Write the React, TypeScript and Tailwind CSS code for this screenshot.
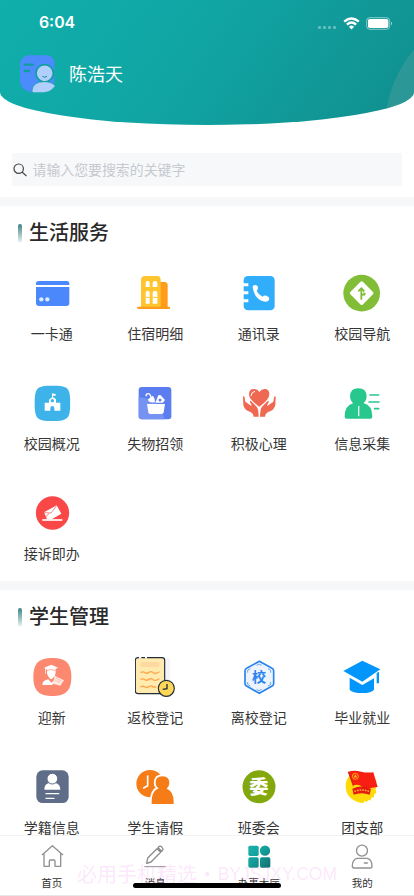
import type { ReactNode } from "react";

type Item = { label: string; box: string; art: ReactNode };

const CARD = "95 39 120 120";
const CARD_R = "406 39 120 120";
const LOW = "95 36 120 120";
const LOW_R = "406 36 120 120";

const life: Item[] = [
  {
    label: "一卡通",
    box: CARD,
    art: (
      <g fill="#4a88fb">
        <path d="M107 75v-4q0-8 8-8h84q8 0 8 8v4z" />
        <path d="M107 81h100v48q0 9-9 9h-82q-9 0-9-9z" />
        <circle cx="123" cy="118" r="6.5" fill="#dceaff" />
        <circle cx="141" cy="118" r="6.5" fill="#dceaff" />
      </g>
    ),
  },
  {
    label: "住宿明细",
    box: CARD_R,
    art: (
      <g>
        <path d="M480 66h14q10 0 10 10v66h-24z" fill="#ff9c1a" />
        <path d="M424 142V60q0-12 12-12h36q11 0 11 12v82z" fill="#fec52f" />
        <rect x="413" y="140" width="98" height="7" rx="2" fill="#ff9c1a" />
        <path
          d="M438 81V69q0-6 6-6t6 6v12zM459 81V69q0-6 7-6t7 6v12zM438 131V98q0-6 6-6t6 6v33zM459 131V98q0-6 7-6t7 6v33z"
          fill="#fff"
        />
        <path d="M438 112h12M459 112h14" stroke="#fec52f" strokeWidth="3" />
      </g>
    ),
  },
  {
    label: "通讯录",
    box: CARD,
    art: (
      <g>
        <rect x="109" y="48" width="93" height="103" rx="13" fill="#30aefb" />
        <path d="M105 70h18v9h-18zM105 94h18v9h-18zM105 118h18v9h-18z" fill="#fff" />
        <path
          d="M136 82q0-7 8-7 8 1 8 9 0 5-4 8 5 12 18 18 4-5 11-3 9 3 9 10-2 8-12 8-33-6-38-43z"
          fill="#fff"
        />
      </g>
    ),
  },
  {
    label: "校园导航",
    box: CARD_R,
    art: (
      <g>
        <circle cx="465" cy="99.500" r="55" fill="#82bd38" />
        <rect x="438.500" y="73" width="53" height="53" rx="5" fill="#fff" transform="rotate(45 465 99.500)" />
        <path d="M464 119V86m-9 8 9-9 9 9M464 108q1-5 9-5" fill="none" stroke="#82bd38" strokeWidth="5.500" />
        <path d="M470 95l8 6-6 8z" fill="#82bd38" />
      </g>
    ),
  },
  {
    label: "校园概况",
    box: CARD,
    art: (
      <g>
        <path
          d="M156 47C180 47 193 48 201 56C208 64 209.500 76 209.500 99.500C209.500 124 208 136 200 144C192 151.500 180 153 156 153C132 153 120 151.500 112 144C105 136 103 124 103 99.500C103 76 105 64 112 56C120 48 132 47 156 47z"
          fill="#3db3e9"
        />
        <path
          d="M155 84V70L166 72V77H158V81L167 88V98H180V122H162V114Q162 108 156 108Q150 108 150 114V122H133V98H146V89L155 82z"
          fill="#fff"
        />
        <circle cx="156" cy="92" r="5" fill="#3db3e9" />
      </g>
    ),
  },
  {
    label: "失物招领",
    box: CARD_R,
    art: (
      <g>
        <rect x="417" y="51" width="98" height="97" rx="9" fill="#5c7df0" />
        <path d="M417 82q66 2 77 66h-68q-9 0-9-9z" fill="#7692f2" />
        <path d="M442 102h54l-4 25q-1 5-6 5h-34q-5 0-6-5z" fill="#fff" />
        <path d="M439 79q0-8 7-8 4 0 6 5l7 21" stroke="#fff" strokeWidth="4" fill="none" />
        <path d="M445 88l15-11q6 8 6 20h-13q-8-2-8-9z" fill="#fff" />
        <path d="M467 98l9-22 6-1 14 15-6 8z" fill="#fff" />
        <circle cx="481" cy="90" r="4.500" fill="#5c7df0" />
      </g>
    ),
  },
  {
    label: "积极心理",
    box: CARD,
    art: (
      <g fill="#ef6852">
        <path d="M156 110q-31-21-31-37 0-16 15-16 11 0 16 9 6-9 16-9 14 0 14 16 0 17-30 37z" />
        <path d="M131 77q1-11 11-13" stroke="#fff" strokeWidth="3" fill="none" strokeLinecap="round" />
        <path d="M107 80q4-3 5 3l2 12 17 12q4 0-2-8-3-8 2-6l17 17q6 7 6 30h-15q0-9-9-14-19-5-22-21z" />
        <path d="M205 80q-4-3-5 3l-2 12-17 12q-4 0 2-8 3-8-2-6l-17 17q-6 7-6 30h15q0-9 9-14 19-5 22-21z" />
      </g>
    ),
  },
  {
    label: "信息采集",
    box: CARD_R,
    art: (
      <g>
        <path
          d="M439 100q-9-9-9-20 0-25 25-25t25 25q0 11-9 20 26 6 26 40 0 6-6 6h-71q-6 0-6-6 0-33 25-40z"
          fill="#27c78d"
        />
        <path d="M456 109v28" stroke="#e7fff6" strokeWidth="4" strokeLinecap="round" />
        <path d="M490 75h26M487 96h30M504 116h12" stroke="#27c78d" strokeWidth="5" strokeLinecap="round" />
      </g>
    ),
  },
  {
    label: "接诉即办",
    box: CARD,
    art: (
      <g>
        <circle cx="156.500" cy="99" r="50" fill="#fa4848" />
        <path d="M131 97l38-21 14 25-29 17h-14z" fill="#fff" />
        <path d="M126 120h60" stroke="#fff" strokeWidth="5" />
        <path d="M131 98l21 1 17-22M135 113l11-13" fill="none" stroke="#fa4848" strokeWidth="2" />
      </g>
    ),
  },
];

const student: Item[] = [
  {
    label: "迎新",
    box: LOW,
    art: (
      <g>
        <path
          d="M156 39C194 39 213 53 213 96C213 139 194 153 156 153C118 153 99 139 99 96C99 53 118 39 156 39z"
          fill="#fd8870"
        />
        <path d="M131 68l22-9 20 9-7 4v11q0 9-8 15l-3 4h-5l-3-4q-7-6-7-14V72l-4 2v12h-2V70z" fill="#fff" />
        <path d="M139 77q13-7 27 0" stroke="#fd8870" strokeWidth="2" fill="none" />
        <path d="M126 120q0-14 18-17l9 10 10-8-7 15z" fill="#fff" />
        <path d="M163 92l28 14-11 16-22-6z" fill="#ffe7df" />
        <path d="M167 99l16 9M165 105l14 8" stroke="#fd8870" strokeWidth="2" strokeDasharray="3 2" />
      </g>
    ),
  },
  {
    label: "返校登记",
    box: LOW_R,
    art: (
      <g>
        <path d="M486 39h20q6 0 6 6v83h-20z" fill="#f5f5f7" />
        <rect x="407" y="38" width="88" height="108" rx="8" fill="#ffebb0" stroke="#222c3b" strokeWidth="3.500" />
        <path d="M418 38h7M436 38h6" stroke="#fff" strokeWidth="5" />
        <rect x="422" y="51" width="58" height="15" rx="6" fill="#ffd9a0" />
        <g stroke="#ffa64a" strokeWidth="4" fill="none" strokeLinecap="round">
          <path d="M424 82q7-3 12 1t12-1 12 1 18-2" />
          <path d="M424 103q7-3 12 1t12-1 12 1 18-2" />
          <path d="M424 125q7-3 12 1t12-1 12 1h9" />
        </g>
        <circle cx="500" cy="130" r="24" fill="#ffd857" stroke="#222c3b" strokeWidth="3.500" />
        <path d="M502 117v14l-13 2" stroke="#222c3b" strokeWidth="4" fill="none" />
      </g>
    ),
  },
  {
    label: "离校登记",
    box: LOW,
    art: (
      <g>
        <path
          d="M156 49l37 20q6 3 6 8v39q0 5-6 8l-37 21-37-21q-6-3-6-8V77q0-5 6-8z"
          fill="#edf4fe"
          stroke="#2b83ee"
          strokeWidth="5"
          strokeLinejoin="round"
        />
        <path
          d="M121 83v-7l8-5M148 61l7-4 8 4M182 71l8 5v7M121 111v7l8 5M148 133l7 4 8-4M182 123l8-5v-7"
          fill="none"
          stroke="#4b94f0"
          strokeWidth="2.500"
        />
        <text x="155" y="112" fontSize="42" fontWeight="700" textAnchor="middle" fill="#2b83ee">
          校
        </text>
      </g>
    ),
  },
  {
    label: "毕业就业",
    box: LOW_R,
    art: (
      <g fill="#0295fb">
        <path d="M410 78l57-31 54 26-54 37z" />
        <path d="M429 98l38 22 35-20v34q-7 10-36 10t-37-10z" />
        <path d="M510 84l7-4v35h-7z" />
      </g>
    ),
  },
  {
    label: "学籍信息",
    box: LOW,
    art: (
      <g>
        <rect x="108" y="46" width="97" height="98" rx="19" fill="#5f6d88" />
        <path d="M132 104q0-18 15-20h18q15 3 15 20z" fill="#fff" />
        <circle cx="156" cy="71" r="16" fill="#fff" stroke="#5f6d88" strokeWidth="3" />
        <path d="M137 116h38M137 130h24" stroke="#fff" strokeWidth="4" strokeLinecap="round" />
      </g>
    ),
  },
  {
    label: "学生请假",
    box: LOW_R,
    art: (
      <g>
        <circle cx="451" cy="86" r="41" fill="#f57c17" />
        <path d="M444 63v29l-12 7" stroke="#fff" strokeWidth="5" fill="none" strokeLinecap="round" />
        <path
          d="M468 83q0-19 20-19t21 19q0 12-8 18 21 8 21 39v7h-66v-7q0-32 21-40-9-6-9-17z"
          fill="#f57c17"
          stroke="#fff"
          strokeWidth="11"
          paintOrder="stroke"
        />
      </g>
    ),
  },
  {
    label: "班委会",
    box: LOW,
    art: (
      <g>
        <circle cx="155" cy="95.500" r="49.500" fill="#83a80d" />
        <text x="155" y="117" fontSize="58" fontWeight="900" textAnchor="middle" fill="#fff">
          委
        </text>
      </g>
    ),
  },
  {
    label: "团支部",
    box: LOW_R,
    art: (
      <g>
        <path
          d="M430 60q-13 14-13 32 0 24 16 38t38 14l2-7 6 4 8-7 5 3 2-9 8-2 1-9 6-3-2-10 2-30z"
          fill="#ffda09"
        />
        <path d="M424 50q20-5 39 0 17 4 37 2l13 44-22 3q-18 4-28-6-10-7-24-2z" fill="#f71e12" />
        <path d="M425 51l15 43" stroke="#b90d08" strokeWidth="2" />
        <circle cx="446" cy="64" r="9" fill="none" stroke="#ffc41b" strokeWidth="2.500" />
        <path d="M446 58l2 4h4l-3 3 1 4-4-2-4 2 1-4-3-3h4z" fill="#ffc41b" />
        <path d="M437 101q28-13 56 0l-4 18q-24-9-48 0z" fill="#e61c12" />
        <path d="M443 109q22-8 44 0" stroke="#ffb53c" strokeWidth="4" strokeDasharray="5 3" fill="none" />
      </g>
    ),
  },
];

function Section({ title, items }: { title: string; items: Item[] }) {
  return (
    <section>
      <div className="h-[8.500px] bg-[#f6f7f9]" />
      <div className="flex h-[67.500px] items-start pl-[18px] pt-[10px]">
        <span className="mt-[8px] h-[18px] w-1 rounded-t-sm bg-gradient-to-b from-[#3b8485] to-[#e5f1f0]" />
        <h2 className="ml-[7px] text-[20px] font-medium leading-8 text-[#292929]">{title}</h2>
      </div>
      <div className="grid grid-cols-4">
        {items.map((it) => (
          <div key={it.label} className="flex h-[110px] flex-col items-center">
            <svg viewBox={it.box} className="h-10 w-10 shrink-0">
              {it.art}
            </svg>
            <span className="mt-[10px] text-[14px] leading-5 text-[#363636]">{it.label}</span>
          </div>
        ))}
      </div>
    </section>
  );
}

const tabs: Item[] = [
  {
    label: "首页",
    box: "110 259 90 90",
    art: (
      <path
        d="M126 300l30-27 31 27M131 298v37h16v-16q0-3 3-3h11q3 0 3 3v16h17v-37"
        fill="none"
        stroke="#919191"
        strokeWidth="4"
        strokeLinejoin="round"
        strokeLinecap="round"
      />
    ),
  },
  {
    label: "消息",
    box: "420 259 90 90",
    art: (
      <g fill="none" stroke="#8b8b8b" strokeWidth="4" strokeLinejoin="round">
        <path d="M440 326l3-16 28-28 11 11-29 29zM474 279l4-4q4-2 8 3t3 7l-4 5z" />
        <path d="M433 336h64" strokeWidth="3" />
      </g>
    ),
  },
  {
    label: "办事大厅",
    box: "110 259 90 90",
    art: (
      <g>
        <defs>
          <linearGradient id="hall" gradientUnits="userSpaceOnUse" x1="122" y1="273" x2="188" y2="338">
            <stop stopColor="#19b3ad" />
            <stop offset="0.500" stopColor="#149c98" />
            <stop offset="1" stopColor="#126e70" />
          </linearGradient>
        </defs>
        <g fill="url(#hall)">
          <rect x="123" y="273" width="31" height="31" rx="5" />
          <circle cx="173" cy="288" r="15.500" />
          <rect x="123" y="308" width="31" height="31" rx="5" />
          <rect x="158" y="308" width="31" height="31" rx="5" />
        </g>
      </g>
    ),
  },
  {
    label: "我的",
    box: "420 259 90 90",
    art: (
      <g fill="none" stroke="#919191" strokeWidth="4" strokeLinecap="round">
        <circle cx="465" cy="288" r="16.500" />
        <path d="M449 311h32q14 4 14 23 0 6-5 6h-49q-5 0-5-6 0-18 13-23zM472 325h9" />
      </g>
    ),
  },
];

export default function App() {
  return (
    <div className="relative flex h-[896px] w-[414px] flex-col overflow-hidden bg-white font-['Noto_Sans_CJK_SC',sans-serif]">
      <header className="relative h-[125px] shrink-0 overflow-hidden bg-[linear-gradient(125deg,#10afac_0%,#10a5a3_45%,#118e8e_100%)] text-white [border-radius:0_0_50%_50%/0_0_33px_33px]">
        <div className="absolute left-[385px] top-[8px] h-[240px] w-[240px] rounded-full bg-[#7baaa6]/25" />
        <div className="relative flex h-[46px] items-center justify-between pl-[39px] pr-[21px]">
          <span className="font-[Inter,sans-serif] text-[15.800px] font-semibold leading-6">6:04</span>
          <div className="flex items-center">
            <div className="mr-[7px] mt-2 flex gap-[2px]">
              {[0, 1, 2, 3].map((i) => (
                <i key={i} className="h-[3px] w-[3px] rounded-[1px] bg-white/35" />
              ))}
            </div>
            <svg viewBox="0 0 17 13" className="mr-[6px] h-[13px] w-[17px]" fill="none" stroke="#fff" strokeWidth="2.400">
              <path d="M1.200 4.600Q8.500-1.700 15.800 4.600M3.900 7.600q4.600-4 9.200 0" />
              <path d="M5.900 9.700q2.600-2.200 5.200 0l-2.600 2.700z" fill="#fff" stroke="none" />
            </svg>
            <svg viewBox="0 0 27 13" className="h-[13px] w-[27px]">
              <rect x=".7" y=".7" width="23" height="11.600" rx="3" fill="none" stroke="#fff" strokeOpacity=".5" />
              <rect x="2" y="2" width="20.400" height="9" rx="1.700" fill="#fff" />
              <path d="M25 4.500q2 2 0 4z" fill="#fff" fillOpacity=".6" />
            </svg>
          </div>
        </div>
        <div className="relative flex items-center pl-5 pt-[9px]">
          <svg viewBox="60 167 105 114" className="h-[38px] w-[35px]">
            <path d="M82 168h62q19 4 19 24v60l-46 27H91q-31-8-31-36v-51q5-18 22-24z" fill="#4b8bfb" />
            <path d="M74 196h24M74 215h13" stroke="#109f9d" strokeWidth="7" strokeLinecap="round" />
            <circle cx="134" cy="222" r="26" fill="#b1cffb" stroke="#109f9d" strokeWidth="5" />
            <path d="M96 274q2-27 37-27 23 0 33 13-14 20-38 20H98z" fill="#b1cffb" stroke="#109f9d" strokeWidth="2" />
            <path d="M127 231q7 6 14 0" stroke="#138d9b" strokeWidth="3" fill="none" />
          </svg>
          <span className="-mt-[2px] ml-[14px] text-[18px] leading-7">陈浩天</span>
        </div>
      </header>
      <main className="min-h-0 flex-1 overflow-hidden">
        <div className="flex h-[72px] items-start px-3 pt-7">
          <div className="flex h-[33px] w-full items-center bg-[#f7f8fa]">
            <svg viewBox="0 0 14 14" className="ml-px h-[14px] w-[14px]" fill="none" stroke="#464646" strokeWidth="1.200">
              <circle cx="5.700" cy="5.700" r="4.700" />
              <path d="M9 9l4.500 4" />
            </svg>
            <span className="-mt-[2px] ml-[5.500px] text-[13.900px] leading-5 text-[#c6c9ce]">请输入您要搜索的关键字</span>
          </div>
        </div>
        <Section title="生活服务" items={life} />
        <div className="-mt-[22px]">
          <Section title="学生管理" items={student} />
        </div>
      </main>
      <nav className="grid h-[61px] shrink-0 grid-cols-4 border-b border-t border-b-[#e7e7e7] border-t-[#f3f3f3] bg-white">
        {tabs.map((t) => (
          <div key={t.label} className="flex flex-col items-center pt-[5px]">
            <svg viewBox={t.box} className="h-[30px] w-[30px]">
              {t.art}
            </svg>
            <span className="mt-1 text-[10.500px] leading-4 text-[#333]">{t.label}</span>
          </div>
        ))}
      </nav>
      <div className="absolute left-[77px] top-[860px] flex w-[260px] items-center justify-between whitespace-nowrap text-[20px] leading-7 text-[#f39ff1]/25">
        <span>必用手机精选</span>
        <span>•</span>
        <span className="font-['Liberation_Sans',sans-serif] text-[17.500px]">BYJSJXY.COM</span>
      </div>
      <div className="absolute left-[133px] top-[883px] h-[4.500px] w-[148px] rounded-full bg-black" />
    </div>
  );
}
